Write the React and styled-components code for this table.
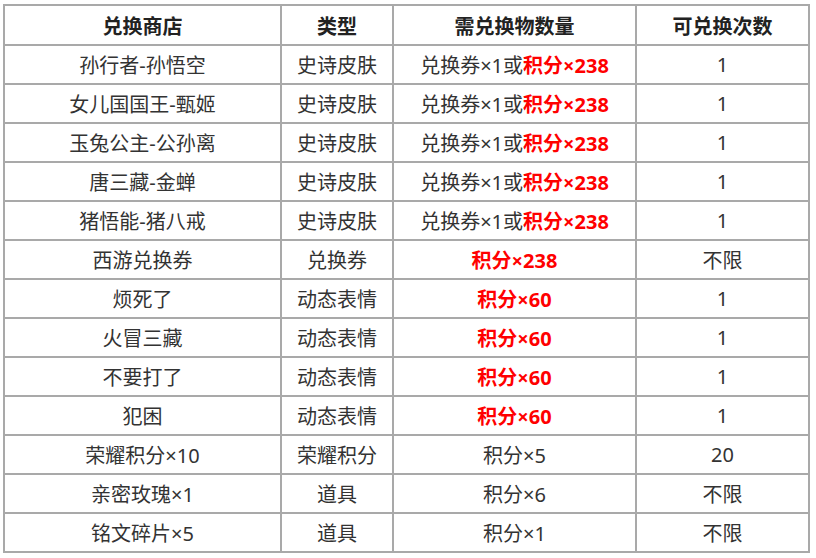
import React from "react";
import styled, { createGlobalStyle } from "styled-components";

const GlobalStyle = createGlobalStyle`
	html, body {
		margin: 0;
		padding: 0;
		background: #ffffff;
	}
	body {
		font-family: "Noto Sans", "Noto Sans CJK SC", sans-serif;
	}
`;

// rows of the exchange shop; cost is split into plain part + red part
const rows = [
	{ name: "孙行者-孙悟空", type: "史诗皮肤", plain: "兑换券×1或", red: "积分×238", times: "1" },
	{ name: "女儿国国王-甄姬", type: "史诗皮肤", plain: "兑换券×1或", red: "积分×238", times: "1" },
	{ name: "玉兔公主-公孙离", type: "史诗皮肤", plain: "兑换券×1或", red: "积分×238", times: "1" },
	{ name: "唐三藏-金蝉", type: "史诗皮肤", plain: "兑换券×1或", red: "积分×238", times: "1" },
	{ name: "猪悟能-猪八戒", type: "史诗皮肤", plain: "兑换券×1或", red: "积分×238", times: "1" },
	{ name: "西游兑换券", type: "兑换券", plain: "", red: "积分×238", times: "不限" },
	{ name: "烦死了", type: "动态表情", plain: "", red: "积分×60", times: "1" },
	{ name: "火冒三藏", type: "动态表情", plain: "", red: "积分×60", times: "1" },
	{ name: "不要打了", type: "动态表情", plain: "", red: "积分×60", times: "1" },
	{ name: "犯困", type: "动态表情", plain: "", red: "积分×60", times: "1" },
	{ name: "荣耀积分×10", type: "荣耀积分", plain: "积分×5", red: "", times: "20" },
	{ name: "亲密玫瑰×1", type: "道具", plain: "积分×6", red: "", times: "不限" },
	{ name: "铭文碎片×5", type: "道具", plain: "积分×1", red: "", times: "不限" },
];

const App = () => {
	return (
		<Page>
			<GlobalStyle />
			<Table>
				<colgroup>
					<col style={{ width: 277 }} />
					<col style={{ width: 112 }} />
					<col style={{ width: 243 }} />
					<col style={{ width: 173 }} />
				</colgroup>
				<thead>
					<tr>
						<Head>兑换商店</Head>
						<Head>类型</Head>
						<Head>需兑换物数量</Head>
						<Head>可兑换次数</Head>
					</tr>
				</thead>
				<tbody>
					{rows.map((r) => (
						<tr key={r.name}>
							<Cell>{r.name}</Cell>
							<Cell>{r.type}</Cell>
							<Cell>
								{r.plain}
								{r.red && <Red>{r.red}</Red>}
							</Cell>
							<Cell>{r.times}</Cell>
						</tr>
					))}
				</tbody>
			</Table>
		</Page>
	);
};

const Page = styled.div`
	width: 816px;
	height: 558px;
	padding: 4px 0 0 3px;
	box-sizing: border-box;
	background: #ffffff;
`;
const Table = styled.table`
	border-collapse: collapse;
	table-layout: fixed;
	width: 807px;
`;
const Head = styled.th`
	height: 38px;
	padding: 0;
	border: 2px solid #a9a9a9;
	font-size: 20px;
	font-weight: 700;
	color: #222222;
	text-align: center;
	vertical-align: middle;
`;
const Cell = styled.td`
	height: 37px;
	padding: 0;
	border: 2px solid #a9a9a9;
	font-size: 20px;
	font-weight: 400;
	color: #333333;
	text-align: center;
	vertical-align: middle;
	white-space: nowrap;
`;
const Red = styled.span`
	color: #ff0000;
	font-weight: 700;
`;

export default App;
